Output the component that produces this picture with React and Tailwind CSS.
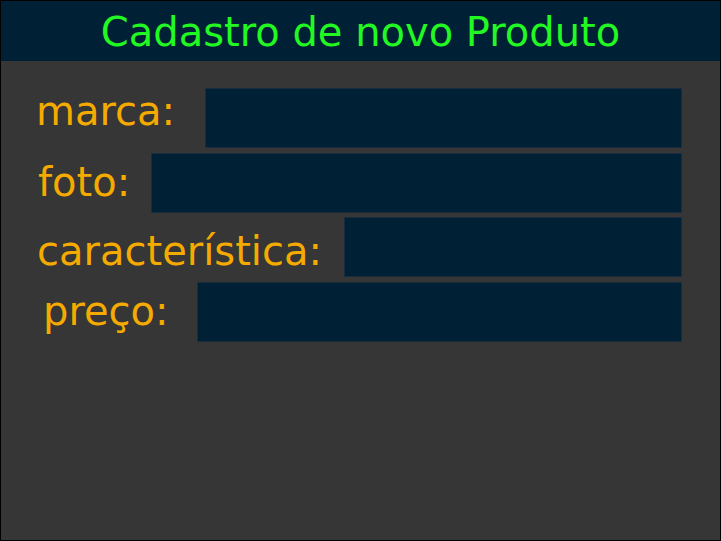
import React from "react";

// campos do formulário: rótulo, recuo do rótulo, largura do campo, margem acima
const campos = [
  { label: "marca:", pl: "pl-[35px]", lb: "mb-[14px]", w: "w-[477px]", mt: "mt-[27px]" },
  { label: "foto:", pl: "pl-[37px]", lb: "mb-[2px]", w: "w-[531px]", mt: "mt-[5px]" },
  { label: "característica:", pl: "pl-[36px]", lb: "mt-[8px]", w: "w-[338px]", mt: "mt-[4px]" },
  { label: "preço:", pl: "pl-[42px]", lb: "mb-[2px]", w: "w-[485px]", mt: "mt-[5px]" },
];

export default function App() {
  return (
    <div
      className="w-[721px] h-[541px] border border-black bg-[#363636] flex flex-col"
      style={{ fontFamily: '"DejaVu Sans", sans-serif' }}
    >
      {/* Cabeçalho */}
      <header className="h-[60px] shrink-0 bg-[#002035] pt-[8px] text-center">
        <h1 className="text-[40px] leading-[normal] font-normal text-[#22f822]">
          Cadastro de novo Produto
        </h1>
      </header>

      {/* Formulário */}
      <form className="flex flex-col pr-[38px]">
        {campos.map((c) => (
          <div key={c.label} className={`flex items-center h-[60px] ${c.mt} ${c.pl}`}>
            <label className={`text-[40px] leading-[normal] text-[#f5aa00] whitespace-nowrap ${c.lb}`}>
              {c.label}
            </label>
            <input
              type="text"
              className={`ml-auto h-[60px] ${c.w} bg-[#002035] border border-[#1a2d3e] outline-none`}
            />
          </div>
        ))}
      </form>
    </div>
  );
}
